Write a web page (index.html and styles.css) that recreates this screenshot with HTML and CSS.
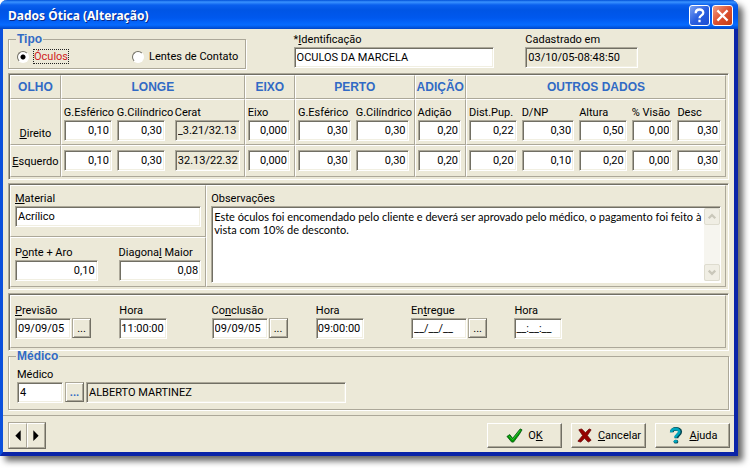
FILE: index.html
```html
<!DOCTYPE html>
<html lang="pt-BR">
<head>
<meta charset="utf-8">
<title>Dados Ótica (Alteração)</title>
<link rel="stylesheet" href="styles.css">
</head>
<body>
<form class="window">
  <header class="titlebar">
    <h1>Dados Ótica (Alteração)</h1>
    <button type="button" class="caption help" aria-label="Ajuda de contexto"><svg viewBox="0 0 20 20"><path d="M6 7.500C6 2.500 14 2.500 14 7 14 10 10 9.800 10 13M10 14.600v2.400" fill="none" stroke="#fff" stroke-width="2.400"/></svg></button>
    <button type="button" class="caption close" aria-label="Fechar"><svg viewBox="0 0 20 20"><path d="M5.500 5.500l9 9M14.500 5.500l-9 9" fill="none" stroke="#fff" stroke-width="2.400" stroke-linecap="square"/></svg></button>
  </header>

  <main class="content">
    <div class="top">
      <fieldset class="group kind">
        <legend>Tipo</legend>
        <label><input type="radio" name="tipo" checked><span class="focused">Óculos</span></label>
        <label><input type="radio" name="tipo"><span>Lentes de Contato</span></label>
      </fieldset>
      <div class="field ident"><label for="ident">*<u>I</u>dentificação</label><input id="ident" value="OCULOS DA MARCELA"></div>
      <div class="field created"><label for="created">Cadastrado em</label><input id="created" value="03/10/05-08:48:50" readonly></div>
    </div>

    <div class="panel">
      <table class="exam">
        <colgroup><col class="c-eye"><col class="c-far"><col class="c-axis"><col class="c-near"><col class="c-add"><col class="c-other"></colgroup>
        <thead>
          <tr><th>OLHO</th><th>LONGE</th><th>EIXO</th><th>PERTO</th><th>ADIÇÃO</th><th>OUTROS DADOS</th></tr>
        </thead>
        <tbody>
          <tr class="right-eye">
            <th scope="row"><u>D</u>ireito</th>
            <td><div class="cells far">
              <div class="field"><label for="d1">G.Esférico</label><input id="d1" value="0,10"></div>
              <div class="field"><label for="d2">G.Cilíndrico</label><input id="d2" value="0,30"></div>
              <div class="field"><label for="d3">Cerat</label><input id="d3" value="_3.21/32.13" readonly></div>
            </div></td>
            <td><div class="cells">
              <div class="field"><label for="d4">Eixo</label><input id="d4" value="0,000"></div>
            </div></td>
            <td><div class="cells near">
              <div class="field"><label for="d5">G.Esférico</label><input id="d5" value="0,30"></div>
              <div class="field"><label for="d6">G.Cilíndrico</label><input id="d6" value="0,30"></div>
            </div></td>
            <td><div class="cells">
              <div class="field"><label for="d7">Adição</label><input id="d7" value="0,20"></div>
            </div></td>
            <td><div class="cells other">
              <div class="field"><label for="d8">Dist.Pup.</label><input id="d8" value="0,22"></div>
              <div class="field"><label for="d9">D/NP</label><input id="d9" value="0,30"></div>
              <div class="field"><label for="d10">Altura</label><input id="d10" value="0,50"></div>
              <div class="field"><label for="d11">% Visão</label><input id="d11" value="0,00"></div>
              <div class="field"><label for="d12">Desc</label><input id="d12" value="0,30"></div>
            </div></td>
          </tr>
          <tr class="left-eye">
            <th scope="row"><u>E</u>squerdo</th>
            <td><div class="cells far">
              <input aria-label="G.Esférico" value="0,10"><input aria-label="G.Cilíndrico" value="0,30"><input aria-label="Cerat" value="32.13/22.32" readonly>
            </div></td>
            <td><div class="cells"><input aria-label="Eixo" value="0,000"></div></td>
            <td><div class="cells near"><input aria-label="G.Esférico" value="0,30"><input aria-label="G.Cilíndrico" value="0,30"></div></td>
            <td><div class="cells"><input aria-label="Adição" value="0,20"></div></td>
            <td><div class="cells other">
              <input aria-label="Dist.Pup." value="0,20"><input aria-label="D/NP" value="0,10"><input aria-label="Altura" value="0,20"><input aria-label="% Visão" value="0,00"><input aria-label="Desc" value="0,30">
            </div></td>
          </tr>
        </tbody>
      </table>
    </div>

    <div class="panel frame">
      <div class="frame-side">
        <div class="cell material">
          <div class="field"><label for="material"><u>M</u>aterial</label><input id="material" value="Acrílico"></div>
        </div>
        <div class="cell sizes">
          <div class="field"><label for="ponte">P<u>o</u>nte + Aro</label><input class="num" id="ponte" value="0,10"></div>
          <div class="field"><label for="diag">Diagona<u>l</u> Maior</label><input class="num" id="diag" value="0,08"></div>
        </div>
      </div>
      <div class="cell notes field">
        <label for="obs">Observações</label>
        <div class="memo">
          <textarea id="obs">Este óculos foi encomendado pelo cliente e deverá ser aprovado pelo médico, o pagamento foi feito à vista com 10% de desconto.</textarea>
          <div class="scroll">
            <button type="button" aria-label="Rolar para cima"><svg viewBox="0 0 15 16"><path d="M4 10l3.500-3.500L11 10" fill="none" stroke="#c9c7ba" stroke-width="2.400"/></svg></button>
            <button type="button" aria-label="Rolar para baixo"><svg viewBox="0 0 15 16"><path d="M4 6l3.500 3.500L11 6" fill="none" stroke="#c9c7ba" stroke-width="2.400"/></svg></button>
          </div>
        </div>
      </div>
    </div>

    <div class="panel">
      <div class="cell dates">
        <div class="field"><label for="prev"><u>P</u>revisão</label><div class="pick"><input id="prev" value="09/09/05"><button type="button" aria-label="Escolher previsão">...</button></div></div>
        <div class="field"><label for="h1">Hora</label><input class="hour" id="h1" value="11:00:00"></div>
        <div class="field"><label for="conc">Co<u>n</u>clusão</label><div class="pick"><input id="conc" value="09/09/05"><button type="button" aria-label="Escolher conclusão">...</button></div></div>
        <div class="field"><label for="h2">Hora</label><input class="hour" id="h2" value="09:00:00"></div>
        <div class="field"><label for="ent">En<u>t</u>regue</label><div class="pick"><input id="ent" value="__/__/__"><button type="button" aria-label="Escolher entrega">...</button></div></div>
        <div class="field"><label for="h3">Hora</label><input class="hour" id="h3" value="__:__:__"></div>
      </div>
    </div>

    <fieldset class="group doctor">
      <legend>Médico</legend>
      <div class="field">
        <label for="med">Médico</label>
        <div class="lookup"><input id="med" value="4"><button type="button" class="blue" aria-label="Procurar médico">...</button><input aria-label="Nome do médico" value="ALBERTO MARTINEZ" readonly></div>
      </div>
    </fieldset>
  </main>

  <footer class="actions">
    <div class="nav">
      <button type="button" aria-label="Anterior"><svg viewBox="0 0 18 24"><path d="M12 6v12L6 12z"/></svg></button>
      <button type="button" aria-label="Próximo"><svg viewBox="0 0 18 24"><path d="M6 6v12l6-6z"/></svg></button>
    </div>
    <div class="commands">
      <button type="button"><svg viewBox="0 0 18 18"><path d="M1 10l3-2 3 4L15 2l2 1-3 5-6 8H6z" fill="#009a00" stroke="#004c10" stroke-width=".8"/><path d="M3 9.500l4 4L15 3.500" fill="none" stroke="#35c43a"/></svg><span>O<u>K</u></span></button>
      <button type="button"><svg viewBox="0 0 18 18"><path d="M3 3l3-1 4 4 4-4 2 1-4 6 4 5-3 2-4-4-4 4-3-1 5-6z" fill="#960000" stroke="#650000" stroke-width=".8"/></svg><span><u>C</u>ancelar</span></button>
      <button type="button"><svg viewBox="0 0 18 18"><path d="M5 5.500C5 1 14 1 14 5c0 3-4 3-4 7" fill="none" stroke="#064550" stroke-width="4"/><path d="M4.500 5.500C4.500 1 13 1 13 5c0 3-4 3-4 6.500" fill="none" stroke="#00a5bd" stroke-width="2.800"/><ellipse cx="9.500" cy="15.500" rx="2.500" ry="2" fill="#064550"/><ellipse cx="9" cy="15" rx="2" ry="1.600" fill="#00a5bd"/></svg><span><u>A</u>juda</span></button>
    </div>
  </footer>
</form>
</body>
</html>
```
FILE: styles.css
```css
:root {
  --face: #ece9d8;
  --shade: #aca899;
  --dark: #716f64;
  --blue: #316ac5;
}
* { box-sizing: border-box; }
body {
  margin: 0;
  padding: 0 12px 12px 0;
  background: #fff;
  color: #000;
  font: 11px/13px Roboto, "Liberation Sans", sans-serif;
}
input, button, textarea { font: inherit; color: inherit; margin: 0; }
u { text-underline-offset: 1px; }
svg { display: block; }

.window {
  border: solid #0a24a8;
  border-width: 0 4px 4px 3px;
  border-left-color: #0b50dc;
  border-radius: 7px 7px 0 0;
  background: var(--face);
  box-shadow: 5px 5px 6px rgba(0, 0, 0, .6);
}
.titlebar {
  display: flex;
  align-items: center;
  gap: 2px;
  height: 29px;
  margin: 0 -4px 0 -3px;
  padding: 2px 5px 0 8px;
  border-radius: 7px 7px 0 0;
  background: linear-gradient(#0050d8, #3a93ff 2px, #0a60ee 5px, #0055e5 10px, #0058ee 18px, #066bff 25px, #0046c8 29px);
}
.titlebar h1 {
  flex: 1;
  margin: 0;
  color: #fff;
  font: bold 12px/16px "Noto Sans", sans-serif;
  text-shadow: 1px 1px #0a2a88;
}
.caption {
  width: 21px;
  height: 21px;
  padding: 0;
  border: 1px solid #fff;
  border-radius: 3px;
}
.help { background: linear-gradient(135deg, #7ba2f2, #2b5fe0 50%, #1c4ed2); }
.close { background: linear-gradient(135deg, #f0a088, #dd5030 50%, #c33d14); }

.content {
  display: flex;
  flex-direction: column;
  gap: 3px;
  padding: 4px 5px 5px;
}

/* Text fields */
.field { display: flex; flex-direction: column; gap: 1px; min-width: 0; }
.field label { white-space: nowrap; }
input:not([type="radio"]) {
  width: 100%;
  min-width: 0;
  height: 21px;
  padding: 0 2px 1px;
  border: 1px solid;
  border-color: var(--shade) #fff #fff var(--shade);
  border-radius: 0;
  background: #fff;
  box-shadow: inset 1px 1px var(--dark), inset -1px -1px #f1efe2;
  outline: 0;
}
input[readonly]:not([type="radio"]) { padding-right: 0; background: var(--face); }

/* Group boxes */
.group {
  min-width: 0;
  margin: 0;
  border: 1px solid var(--shade);
  box-shadow: 1px 1px #fff, inset 1px 0 #fff;
}
.group legend {
  padding: 0 1px;
  color: var(--blue);
  font: bold 12px/13px "Liberation Sans", Arial, sans-serif;
}

.top {
  display: grid;
  grid-template-columns: 286fr 232fr 204fr;
  align-items: start;
  margin-bottom: 1px;
}
.kind {
  display: grid;
  grid-template-columns: 115px auto;
  width: 238px;
  height: 36px;
  padding: 3px 8px 0;
}
.kind legend { margin-left: -1px; }
.kind label { display: flex; align-items: center; gap: 5px; height: 15px; white-space: nowrap; }
.focused { color: #d02020; outline: 1px dotted #222; }
input[type="radio"] {
  appearance: none;
  width: 12px;
  height: 12px;
  border: 1px solid;
  border-color: var(--dark) #fff #fff var(--dark);
  border-radius: 50%;
  background: #fff;
}
input[type="radio"]:checked { background: radial-gradient(circle, #000 2px, #fff 3px); }
.ident input { width: 200px; }
.created input { width: 113px; }

/* Bevelled panels */
.panel {
  padding: 1px 2px 2px 1px;
  border: 1px solid;
  border-color: var(--shade) #fff #fff var(--shade);
  box-shadow: inset 1px 1px var(--dark);
}
.cell, .exam th, .exam td {
  border: 1px solid;
  border-color: #fff var(--shade) var(--shade) #fff;
}

.exam { width: 100%; table-layout: fixed; border-spacing: 0; }
.exam th { padding: 0; font-weight: normal; }
.exam thead th { height: 24px; color: var(--blue); font: bold 12px/14px "Liberation Sans", Arial, sans-serif; }
.exam td { padding: 2px; vertical-align: bottom; }
.c-eye { width: 7.1%; }
.c-far { width: 25.7%; }
.c-axis { width: 7%; }
.c-near { width: 16.7%; }
.c-add { width: 7.2%; }
.right-eye > * { height: 46px; }
.exam .right-eye th { vertical-align: bottom; padding-bottom: 4px; }
.left-eye > * { height: 32px; }
.exam .cells { display: grid; grid-template-columns: 1fr; column-gap: 5px; padding: 0 2px 1px 0; }
.exam .far { grid-template-columns: 48fr 53fr 65fr; }
.exam .near { grid-template-columns: 1fr 1fr; padding-right: 3px; }
.exam .other { grid-template-columns: 48fr 53fr 48fr 41fr 44fr; }
.exam input:not([readonly]) { text-align: right; }
.far > :nth-child(2) input, .left-eye .far > :nth-child(2) { width: 48px; }
.exam .left-eye .cells { padding-bottom: 3px; }

.frame { display: grid; grid-template-columns: 197fr 522fr; }
.frame-side { display: flex; flex-direction: column; }
.material { padding: 6px 4px 9px; }
.sizes {
  flex: 1;
  display: grid;
  grid-template-columns: 1fr 1fr;
  gap: 21px;
  padding: 8px 4px 5px;
}
.num { text-align: right; }
.notes { padding: 6px 4px 3px; }
.memo {
  flex: 1;
  display: flex;
  min-height: 77px;
  border: 1px solid;
  border-color: var(--shade) #fff #fff var(--shade);
  background: #fff;
  box-shadow: inset 1px 1px var(--dark);
}
textarea {
  flex: 1;
  padding: 3px 0 3px 2px;
  border: 0;
  background: transparent;
  font-family: Lato, "Liberation Sans", sans-serif;
  resize: none;
  outline: 0;
  overflow: hidden;
}
.scroll {
  display: flex;
  flex-direction: column;
  justify-content: space-between;
  width: 16px;
  margin: 1px 0;
  background: #f6f5ef;
}
.scroll button {
  width: 16px;
  height: 17px;
  padding: 0;
  border: 1px solid #dedccf;
  border-radius: 2px;
  background: #f0eee4;
}

.dates {
  display: grid;
  grid-template-columns: 104fr 92fr 104fr 95fr 103fr 206fr;
  padding: 8px 4px 8px;
}
.pick { display: flex; gap: 1px; }
.pick input { width: 56px; }
.hour { max-width: 48px; }
.dates input.hour { padding: 0 0 1px 1px; }
.pick button, .lookup button {
  width: 19px;
  height: 20px;
  padding: 0;
  border: 1px solid;
  border-color: var(--shade) var(--dark) var(--dark) var(--shade);
  background: var(--face);
  box-shadow: inset 1px 1px #fff, inset -1px -1px var(--shade);
}

.group.doctor { margin-top: -4px; padding: 5px 8px 6px; }
.doctor legend { margin-left: -1px; }
.lookup { display: grid; grid-template-columns: 46px 19px 260px; gap: 2px; }
.lookup .blue { color: var(--blue); font-weight: bold; }

.actions {
  display: flex;
  justify-content: space-between;
  align-items: center;
  padding: 6px 4px 3px 5px;
  border-top: 1px solid var(--shade);
}
.nav { display: flex; border: 1px solid; border-color: var(--shade) var(--dark) var(--dark) var(--shade); }
.nav button {
  width: 18px;
  height: 25px;
  padding: 0;
  border: 1px solid;
  border-color: #fff var(--shade) var(--shade) #fff;
  background: var(--face);
}
.commands { display: flex; gap: 9px; }
.commands button {
  display: flex;
  align-items: center;
  justify-content: center;
  gap: 5px;
  width: 75px;
  height: 25px;
  padding: 0;
  border: 1px solid;
  border-color: #fff var(--dark) var(--dark) #fff;
  background: var(--face);
  box-shadow: inset -1px -1px var(--shade);
}
.commands svg { width: 17px; height: 17px; }
```
